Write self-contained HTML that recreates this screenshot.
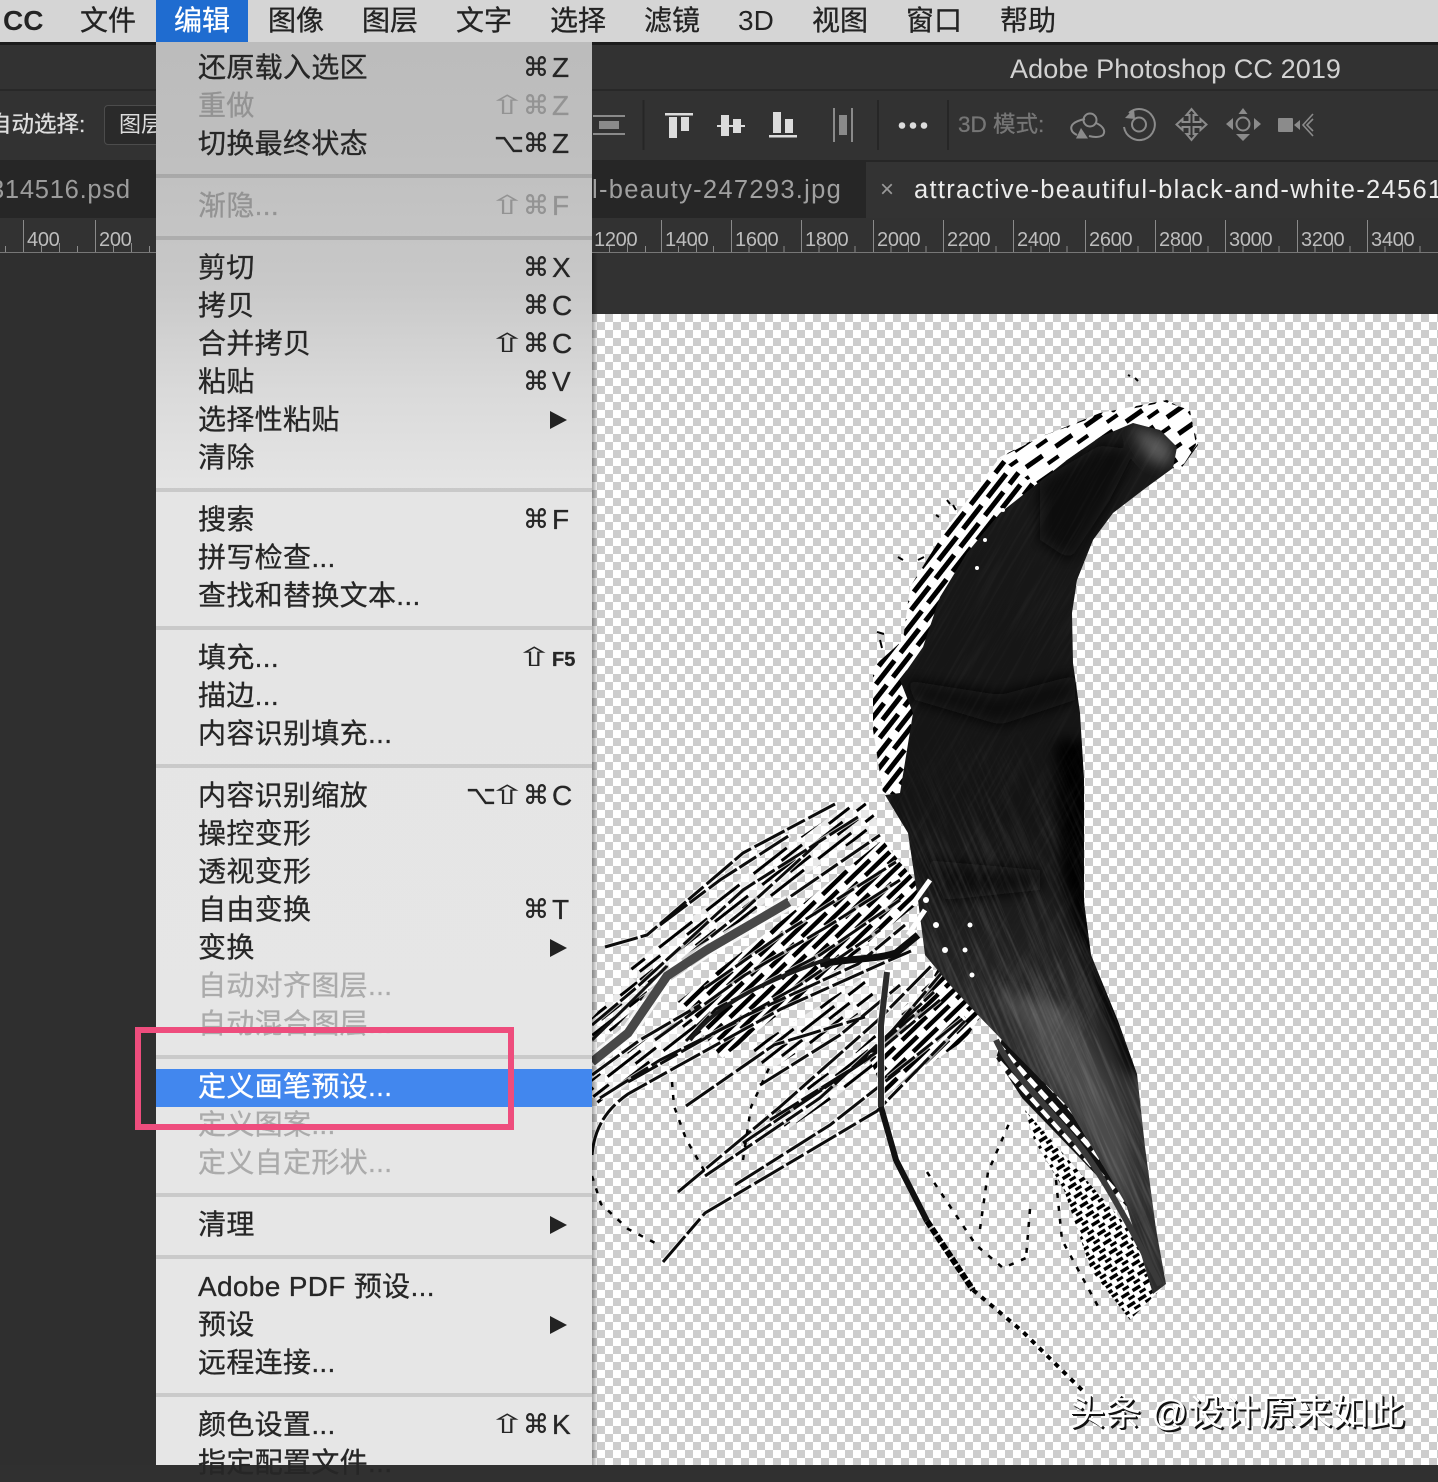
<!DOCTYPE html>
<html lang="zh"><head><meta charset="utf-8"><title>Photoshop</title>
<style>
html,body{margin:0;padding:0;background:#303030}
body{position:relative;width:1438px;height:1465px;overflow:hidden;font-family:"Liberation Sans","Noto Sans CJK SC",sans-serif}
.a{position:absolute;white-space:nowrap}
#bar{left:0;top:0;width:1438px;height:42px;background:#d5d5d5}
#bar2 span{position:absolute;top:0;line-height:41px;font-size:28px;color:#232323;-webkit-text-stroke:.3px currentColor}
#hl{left:156px;top:0;width:92px;height:42px;background:#1f6cd0}
#menu{left:156px;top:42px;width:436px;height:1423px;background:linear-gradient(#bcbcbc 0,#bfbfbf 110px,#c8c8c8 240px,#dadada 350px,#e5e5e5 450px,#e6e6e6 100%)}
.r{position:absolute;left:198px;width:374px;height:38px;line-height:38px;font-size:28px;letter-spacing:.33px;color:#262626;white-space:nowrap;-webkit-text-stroke:.3px currentColor}
.d{color:#ababab}.t{color:#939393}
.r i{position:absolute;top:0;font-style:normal;letter-spacing:0;font-size:28px}
.r i.g{font-family:"DejaVu Sans",sans-serif;font-size:26px}
.r i.s{font-family:"DejaVu Sans",sans-serif;font-size:26px;transform:scaleX(1.75);transform-origin:0 50%;-webkit-text-stroke:0;margin-left:-8px}
.c{left:325px}.l{left:354px}.h{left:298px}.o{left:296px}.o2{left:268px}
.arr{position:absolute;left:352px;top:10px;width:0;height:0;border-left:17px solid #222;border-top:9px solid transparent;border-bottom:9px solid transparent}
.sep{position:absolute;left:156px;width:436px;height:4px;background:rgba(0,0,0,.12)}
.rl{position:absolute;top:227px;font-size:20px;line-height:26px;color:#bdbdbd;letter-spacing:-.3px}
.tab{position:absolute;top:171px;line-height:38px;font-size:25.5px;letter-spacing:1.3px;white-space:nowrap}
</style></head><body>

<div class="a" style="left:0;top:45px;width:1438px;height:44px;background:#323232"></div>
<div class="a" style="left:0;top:42px;width:1438px;height:3px;background:#1c1c1c"></div>
<div class="a" style="left:0;top:89px;width:1438px;height:2px;background:#282828"></div>
<div class="a" style="left:0;top:91px;width:1438px;height:69px;background:#323232"></div>
<div class="a" style="left:0;top:160px;width:1438px;height:58px;background:#262626"></div>
<div class="a" style="left:866px;top:162px;width:572px;height:56px;background:#333"></div>
<div class="a" style="left:0;top:218px;width:1438px;height:96px;background:#323232"></div>
<div class="a" style="left:0;top:252px;width:1438px;height:1px;background:#777"></div>
<div class="a" style="left:0;top:253px;width:156px;height:1212px;background:#2f2f2f"></div>

<div class="a" style="left:1010px;top:50px;line-height:38px;font-size:27px;letter-spacing:.1px;color:#d2d2d2">Adobe Photoshop CC 2019</div>
<div class="a" style="left:-11px;top:108px;line-height:34px;font-size:22.500px;color:#dedede;-webkit-text-stroke:.3px currentColor">自动选择:</div>
<div class="a" style="left:104px;top:105px;width:70px;height:38px;border:1px solid #4c4c4c;border-radius:4px;background:#2a2a2a"></div>
<div class="a" style="left:119px;top:108px;line-height:34px;font-size:22px;color:#dcdcdc">图层</div>
<div class="a" style="left:958px;top:108px;line-height:34px;font-size:22.500px;color:#767676;-webkit-text-stroke:.3px currentColor">3D 模式:</div>

<div class="tab" style="left:-10px;color:#9c9c9c;letter-spacing:.75px">314516.psd</div>
<div class="tab" style="left:592px;color:#a0a0a0">l-beauty-247293.jpg</div>
<div class="tab" style="left:880px;color:#9a9a9a;font-size:24px">×</div>
<div class="tab" style="left:914px;color:#ececec">attractive-beautiful-black-and-white-24561</div>

<svg class="a" style="left:0;top:0" width="1438" height="260" viewBox="0 0 1438 260">
<path d="M23.5 220V252M95.5 220V252M661.5 220V252M731.5 220V252M801.5 220V252M873.5 220V252M943.5 220V252M1013.5 220V252M1085.5 220V252M1155.5 220V252M1225.5 220V252M1297.5 220V252M1367.5 220V252" stroke="#8a8a8a" fill="none"/>
<path d="M5.5 246V252M41.5 246V252M59.5 243V252M77.5 246V252M113.5 246V252M131.5 243V252M149.5 246V252M609.5 246V252M627.5 243V252M645.5 246V252M678.5 246V252M696.5 243V252M713.5 246V252M749 246V252M766.5 243V252M784 246V252M819 246V252M837.5 243V252M855 246V252M891 246V252M908.5 243V252M926 246V252M961 246V252M978.5 243V252M996 246V252M1031 246V252M1049.5 243V252M1067 246V252M1103 246V252M1120.5 243V252M1138 246V252M1173 246V252M1190.5 243V252M1208 246V252M1243 246V252M1261.5 243V252M1279 246V252M1315 246V252M1332.5 243V252M1350 246V252M1385 246V252M1402.5 243V252M1420 246V252" stroke="#8a8a8a" fill="none"/>
<g fill="#8a8a8a"><rect x="593" y="115" width="32" height="2"/><rect x="593" y="133" width="32" height="2"/><rect x="599" y="121" width="20" height="8"/></g>
<g stroke="#262626" stroke-width="2"><path d="M643.5 100V150M878 100V150M948 100V150"/></g>
<g fill="#dcdcdc">
<rect x="665" y="113" width="28" height="2.500"/><rect x="669" y="117" width="8" height="21"/><rect x="681" y="117" width="8" height="14"/>
<rect x="717" y="125" width="28" height="2"/><rect x="721" y="115" width="8" height="21"/><rect x="733" y="119" width="8" height="14"/>
<rect x="769" y="135" width="28" height="2.500"/><rect x="773" y="112" width="8" height="21"/><rect x="785" y="119" width="8" height="14"/>
<circle cx="902" cy="125.500" r="3.300"/><circle cx="913" cy="125.500" r="3.300"/><circle cx="924" cy="125.500" r="3.300"/>
</g>
<g fill="#8a8a8a"><rect x="833" y="108" width="2" height="34"/><rect x="851" y="108" width="2" height="34"/><rect x="839" y="115" width="8" height="20"/></g>
<g fill="none" stroke="#8b8b8b" stroke-width="2">
<circle cx="1090" cy="120" r="6.500"/><path d="M1085 119C1075 121 1069 125 1072 131C1073 133 1075 134 1077 135M1096 123C1103 126 1106 131 1103 135C1099 138 1093 137 1089 136"/>
<circle cx="1139" cy="124.500" r="7"/><path d="M1129 113A15.500 15.500 0 1 1 1124 127"/>
<path d="M1191.500 109l5 6h-3v7h7v-3l6 5.500l-6 5.500v-3h-7v7h3l-5 6l-5-6h3v-7h-7v3l-6-5.500l6-5.500v3h7v-7h-3z"/>
<circle cx="1243" cy="124" r="6.500"/>
<path d="M1313 114L1303 125L1313 136M1313 119L1307 125L1313 131" stroke-width="1.600"/>
</g>
<g fill="#8b8b8b">
<path d="M1076 138.500L1088 138.500L1081 128Z"/><path d="M1125 118L1135 119L1134 109Z"/>
<path d="M1243 108l4.500 6h-9zM1243 141l7-7h-14zM1226 124l7-6v12zM1261 124l-7-6v12z"/>
<rect x="1278" y="118" width="15" height="14" rx="1"/><path d="M1294 125l6-5v10z"/>
</g>
</svg>

<div class="rl" style="left:27px">400</div><div class="rl" style="left:99px">200</div>
<div class="rl" style="left:594px">1200</div><div class="rl" style="left:665px">1400</div><div class="rl" style="left:735px">1600</div><div class="rl" style="left:805px">1800</div><div class="rl" style="left:877px">2000</div><div class="rl" style="left:947px">2200</div><div class="rl" style="left:1017px">2400</div><div class="rl" style="left:1089px">2600</div><div class="rl" style="left:1159px">2800</div><div class="rl" style="left:1229px">3000</div><div class="rl" style="left:1301px">3200</div><div class="rl" style="left:1371px">3400</div>

<div class="a" style="left:592px;top:314px;width:846px;height:1151px;background:conic-gradient(#cdcdcd 25%,#fff 0 50%,#cdcdcd 0 75%,#fff 0);background-size:16px 16px;background-position:5px 0"></div>

<svg class="a" style="left:0;top:0" width="1438" height="1465" viewBox="0 0 1438 1465">
<defs>
<pattern id="sA" width="40" height="18" patternUnits="userSpaceOnUse" patternTransform="translate(900 500) rotate(-52)">
<rect width="40" height="18" fill="#fff"/><rect x="0" y="2" width="30" height="5" fill="#000"/><rect x="16" y="11" width="30" height="5" fill="#000"/><rect x="-24" y="11" width="30" height="5" fill="#000"/>
</pattern>
<pattern id="sT" width="36" height="20" patternUnits="userSpaceOnUse" patternTransform="translate(1000 430) rotate(-35)">
<rect width="36" height="20" fill="#fff"/><rect x="0" y="3" width="20" height="5" fill="#000"/><rect x="20" y="13" width="13" height="4" fill="#000"/>
</pattern>
<pattern id="sB" width="44" height="16" patternUnits="userSpaceOnUse" patternTransform="translate(800 900) rotate(-44)">
<rect width="44" height="16" fill="#fff"/><rect x="0" y="1.500" width="34" height="4.500" fill="#000"/><rect x="20" y="9.500" width="34" height="4.500" fill="#000"/><rect x="-24" y="9.500" width="34" height="4.500" fill="#000"/>
</pattern>
<pattern id="sE" width="60" height="14" patternUnits="userSpaceOnUse" patternTransform="translate(700 1000) rotate(-38)">
<rect width="60" height="14" fill="#fff" fill-opacity=".55"/><rect x="0" y="2" width="42" height="3" fill="#000"/><rect x="30" y="9" width="26" height="3" fill="#000"/>
</pattern>
<pattern id="sC" width="13" height="11" patternUnits="userSpaceOnUse" patternTransform="translate(1060 1150) rotate(-32)">
<rect width="13" height="11" fill="#fff"/><rect x="0" y="2" width="9" height="3.500" fill="#000"/><rect x="5" y="7.500" width="7" height="3" fill="#000"/>
</pattern>
<pattern id="sD" width="16" height="11" patternUnits="userSpaceOnUse" patternTransform="translate(1000 1040) rotate(48)">
<rect width="16" height="11" fill="#111"/><rect x="0" y="2" width="11" height="5" fill="#fff"/>
</pattern>
<linearGradient id="body" x1="0" y1="0" x2="0" y2="1">
<stop offset="0" stop-color="#191919"/><stop offset=".45" stop-color="#141414"/><stop offset=".58" stop-color="#1d1d1d"/><stop offset=".75" stop-color="#333"/><stop offset="1" stop-color="#2c2c2c"/>
</linearGradient>
<linearGradient id="fg" gradientUnits="userSpaceOnUse" x1="0" y1="720" x2="0" y2="960">
<stop offset="0" stop-color="#000"/><stop offset="1" stop-color="#fff"/>
</linearGradient>
<mask id="fadeM" maskUnits="userSpaceOnUse" x="600" y="300" width="800" height="1100"><rect x="600" y="300" width="800" height="1100" fill="url(#fg)"/></mask>
<path id="bodyP" d="M1100 437L1133 423L1160 430L1177 447L1173 468L1147 487L1113 513L1093 540L1077 580L1072 613L1073 663L1080 713L1084 780L1084 902L1091 955L1118 1021L1137 1074L1145 1147L1156 1229L1166 1284L1153 1294L1126 1204L1068 1107L1003 1041L975 1012L950 985L925 955L918 900L908 833L885 795L900 793L913 713L900 680L923 647L940 597L967 553L1000 513L1033 487L1067 460Z"/>
<clipPath id="bodyC"><use href="#bodyP"/></clipPath>
<filter id="hairN" x="0" y="0" width="1" height="1"><feTurbulence type="fractalNoise" baseFrequency="0.012 0.32" numOctaves="3" seed="4"/><feColorMatrix type="matrix" values="0 0 0 0 1 0 0 0 0 1 0 0 0 0 1 1.500 0 0 0 -.62"/></filter>
<filter id="bl6"><feGaussianBlur stdDeviation="7"/></filter>
<g id="fan" fill="none">
<path d="M605 947L647 935L743 853L835 804"/>
<path d="M682 960L743 911L820 841"/>
<path d="M592 1025L636 988L743 890L858 817"/>
<path d="M705 988L781 935L896 862"/>
<path d="M686 1041L716 1009L820 955L900 900"/>
<path d="M678 1192L781 1106L877 1021L954 943"/>
<path d="M628 1082L743 1017L858 964L905 925"/>
<path d="M705 1176L820 1098L934 992"/>
<path d="M743 1143L869 1058L957 955"/>
<path d="M686 1106L774 1045L865 1017"/>
<path d="M888 1078L965 1017"/>
<path d="M640 1000L720 945L800 890L880 835"/>
<path d="M655 1040L745 975L830 925L900 880"/>
<path d="M720 1030L800 985L880 930"/>
<path d="M592 1155C594 1130 605 1110 628 1094L678 1066L781 1009L881 964L911 951"/>
<path d="M663 1262L705 1213L781 1168L877 1111L965 1021"/>
<path d="M735 1185L830 1125L900 1070"/>
<path d="M592 1075L640 1040L700 1005"/>
<path d="M600 1098L660 1060L740 1020"/>
<path d="M760 1085L840 1035L900 985"/>
<path d="M660 925L720 880L790 835"/>
<path d="M770 1120L850 1070L920 1010"/>
<path d="M820 1090L880 1050L940 1000"/>
</g>
</defs>

<!-- upper white striped halo -->
<path d="M1190 413L1167 400L1100 413L1033 440L1000 457L975 490L950 523L910 587L903 640L873 667L873 730L883 793L925 800L960 640L1010 520L1100 450L1180 470L1198 445Z" fill="url(#sA)"/>
<path d="M1190 410L1165 402L1100 415L1040 437L1000 458L1040 490L1110 440L1180 470L1196 445Z" fill="url(#sT)"/>
<path d="M1135 378l3 3M1128 375l2 1M947 500l3 4M953 505l3 5M936 515l3 2M898 557l5 3M918 560l6-3M877 632l7 2M880 640l2 8" stroke="#000" stroke-width="2" fill="none"/>

<!-- fan -->
<g fill="none">
<path d="M592 1035L640 985" stroke="url(#sE)" stroke-width="24"/>
<path d="M640 980L760 885L870 810" stroke="url(#sE)" stroke-width="34"/>
<path d="M592 1095L660 1045L730 1010" stroke="url(#sE)" stroke-width="26"/>
<path d="M760 1060L870 990" stroke="url(#sE)" stroke-width="28"/>
<path d="M780 1120L860 1065L950 980" stroke="url(#sE)" stroke-width="24"/>
<path d="M700 1030L790 960L905 868" stroke="url(#sB)" stroke-width="72"/>
</g>
<path d="M960 930L985 1010L965 1040L885 1095L870 1060L920 1000Z" fill="url(#sB)"/>
<use href="#fan" stroke="#fff" stroke-width="5" opacity=".7"/>
<use href="#fan" stroke="#0c0c0c" stroke-width="3" stroke-dasharray="34 3 20 4"/>
<path d="M592 1062L628 1033L667 976L705 951L789 902" fill="none" stroke="#fff" stroke-width="15" opacity=".8"/>
<path d="M592 1062L628 1033L667 976L705 951L789 902" fill="none" stroke="#484848" stroke-width="9"/>
<path d="M592 1040L628 1005L667 966" fill="none" stroke="#111" stroke-width="3"/>
<path d="M820 964C850 958 875 960 896 953L918 935" fill="none" stroke="#0d0d0d" stroke-width="7"/>
<path d="M690 1040C720 1000 770 980 830 958" fill="none" stroke="#1a1a1a" stroke-width="4"/>

<!-- lower-right stripes -->
<path d="M1025 1110L1126 1225L1162 1288L1130 1320L1091 1270L1064 1190L1034 1140Z" fill="url(#sC)"/>
<path d="M1003 1035L1068 1107L1130 1210L1022 1098L996 1058Z" fill="url(#sD)"/>

<!-- main body -->
<use href="#bodyP" fill="url(#body)"/>
<g clip-path="url(#bodyC)">
<g filter="url(#bl6)">
<path d="M1055 740L1090 740L1090 902L1100 955L1125 1021L1145 1080L1125 1070L1085 960L1062 880Z" fill="#000"/>
<path d="M1040 480L1100 445L1135 450L1110 500L1070 560L1040 540Z" fill="#080808"/>
<path d="M905 680L1000 695L1075 675L1075 700L1000 725L915 700Z" fill="#0a0a0a"/>
<path d="M925 860L1040 870L1040 890L945 900Z" fill="#0c0c0c"/>
<path d="M1000 990L1070 1010L1125 1130L1135 1220L1080 1120Z" fill="#4c4c4c"/>
<path d="M1130 425L1170 440L1172 465L1150 462Z" fill="#5a5a5a"/>
</g>
<g mask="url(#fadeM)"><g transform="rotate(67 1060 1100)"><rect x="560" y="800" width="760" height="520" filter="url(#hairN)" opacity=".24"/></g></g>
<g transform="rotate(-60 1020 620)"><rect x="600" y="350" width="850" height="540" filter="url(#hairN)" opacity=".05"/></g>
</g>
<path d="M996 1040C1010 1070 1040 1100 1075 1140C1100 1170 1130 1225 1160 1285" fill="none" stroke="#3a3a3a" stroke-width="6"/>
<g fill="#fff"><circle cx="1003" cy="510" r="2"/><circle cx="985" cy="540" r="2"/><circle cx="977" cy="568" r="2"/><circle cx="926" cy="900" r="3"/><circle cx="936" cy="925" r="3"/><circle cx="970" cy="925" r="2.500"/><circle cx="965" cy="950" r="2.500"/><circle cx="972" cy="975" r="2.500"/><circle cx="945" cy="950" r="3"/></g>
<path d="M912 905L930 880M908 935L925 910" stroke="#fff" stroke-width="5"/>

<!-- vertical & dashed strands -->
<path d="M887 972L881 1025L881 1107" fill="none" stroke="#fff" stroke-width="8" opacity=".7"/>
<path d="M887 972L881 1025L881 1107" fill="none" stroke="#2c2c2c" stroke-width="6"/>
<path d="M881 1107L896 1160L927 1221" fill="none" stroke="#111" stroke-width="6"/>
<path d="M927 1221L973 1290" fill="none" stroke="#000" stroke-width="6" stroke-dasharray="7 2"/>
<path d="M973 1290L1022 1331L1084 1392" fill="none" stroke="#000" stroke-width="4" stroke-dasharray="5 6"/>
<g fill="none" stroke="#000" stroke-width="2.500" stroke-dasharray="5 8">
<path d="M592 1176L601 1204L628 1229L659 1245"/>
<path d="M672 1082L674 1106L686 1139L705 1172"/>
<path d="M927 1172L976 1245L1003 1268L1026 1258"/>
<path d="M980 1229L988 1172L1011 1119"/>
<path d="M743 1160L751 1107L770 1066"/>
<path d="M1056 1180L1062 1240L1100 1310"/>
<path d="M1030 1209L1026 1258"/>
</g>
</svg>

<div class="a" style="left:592px;top:253px;width:6px;height:1212px;background:linear-gradient(90deg,rgba(0,0,0,.35),rgba(0,0,0,0))"></div>

<div class="a" style="left:1069px;top:1391px;line-height:44px;font-size:36px;letter-spacing:.1px;color:#fff;text-shadow:2px 2px 0 #111,1px 1px 0 #111">头条 @设计原来如此</div>

<div class="a" id="bar"></div>
<div class="a" id="hl"></div>
<div class="a" id="bar2" style="left:0;top:0;width:1438px;height:42px">
<span style="left:3px;font-weight:bold;-webkit-text-stroke:0">CC</span>
<span style="left:80px">文件</span>
<span style="left:174px;color:#fff">编辑</span>
<span style="left:268px">图像</span>
<span style="left:362px">图层</span>
<span style="left:456px">文字</span>
<span style="left:550px">选择</span>
<span style="left:644px">滤镜</span>
<span style="left:738px;-webkit-text-stroke:0">3D</span>
<span style="left:812px">视图</span>
<span style="left:906px">窗口</span>
<span style="left:1000px">帮助</span>
</div>

<div class="a" id="menu"></div>
<div class="sep" style="top:174px"></div>
<div class="sep" style="top:236px"></div>
<div class="sep" style="top:488px"></div>
<div class="sep" style="top:626px"></div>
<div class="sep" style="top:764px"></div>
<div class="sep" style="top:1055px"></div>
<div class="sep" style="top:1193px"></div>
<div class="sep" style="top:1255px"></div>
<div class="sep" style="top:1393px"></div>
<div class="a" style="left:156px;top:1069px;width:436px;height:38px;background:#4287ee"></div>

<div class="r" style="top:49px">还原载入选区<i class="g c">⌘</i><i class="l">Z</i></div>
<div class="r t" style="top:87px">重做<i class="s h">⇧</i><i class="g c">⌘</i><i class="l">Z</i></div>
<div class="r" style="top:125px">切换最终状态<i class="g o">⌥</i><i class="g c">⌘</i><i class="l">Z</i></div>
<div class="r t" style="top:187px">渐隐...<i class="s h">⇧</i><i class="g c">⌘</i><i class="l">F</i></div>
<div class="r" style="top:249px">剪切<i class="g c">⌘</i><i class="l">X</i></div>
<div class="r" style="top:287px">拷贝<i class="g c">⌘</i><i class="l">C</i></div>
<div class="r" style="top:325px">合并拷贝<i class="s h">⇧</i><i class="g c">⌘</i><i class="l">C</i></div>
<div class="r" style="top:363px">粘贴<i class="g c">⌘</i><i class="l">V</i></div>
<div class="r" style="top:401px">选择性粘贴<b class="arr"></b></div>
<div class="r" style="top:439px">清除</div>
<div class="r" style="top:501px">搜索<i class="g c">⌘</i><i class="l">F</i></div>
<div class="r" style="top:539px">拼写检查...</div>
<div class="r" style="top:577px">查找和替换文本...</div>
<div class="r" style="top:639px">填充...<i class="s c">⇧</i><i class="l" style="font-size:20px;font-weight:bold;top:2px">F5</i></div>
<div class="r" style="top:677px">描边...</div>
<div class="r" style="top:715px">内容识别填充...</div>
<div class="r" style="top:777px">内容识别缩放<i class="g o2">⌥</i><i class="s h">⇧</i><i class="g c">⌘</i><i class="l">C</i></div>
<div class="r" style="top:815px">操控变形</div>
<div class="r" style="top:853px">透视变形</div>
<div class="r" style="top:891px">自由变换<i class="g c">⌘</i><i class="l">T</i></div>
<div class="r" style="top:929px">变换<b class="arr"></b></div>
<div class="r d" style="top:967px">自动对齐图层...</div>
<div class="r d" style="top:1005px">自动混合图层...</div>
<div class="r" style="top:1068px;color:#fff">定义画笔预设...</div>
<div class="r d" style="top:1106px">定义图案...</div>
<div class="r d" style="top:1144px">定义自定形状...</div>
<div class="r" style="top:1206px">清理<b class="arr"></b></div>
<div class="r" style="top:1268px">Adobe PDF 预设...</div>
<div class="r" style="top:1306px">预设<b class="arr"></b></div>
<div class="r" style="top:1344px">远程连接...</div>
<div class="r" style="top:1406px">颜色设置...<i class="s h">⇧</i><i class="g c">⌘</i><i class="l">K</i></div>
<div class="r" style="top:1444px">指定配置文件...</div>

<div class="a" style="left:135px;top:1027px;width:367px;height:91px;border:6px solid #ee4d7d;box-sizing:content-box"></div>
</body></html>
